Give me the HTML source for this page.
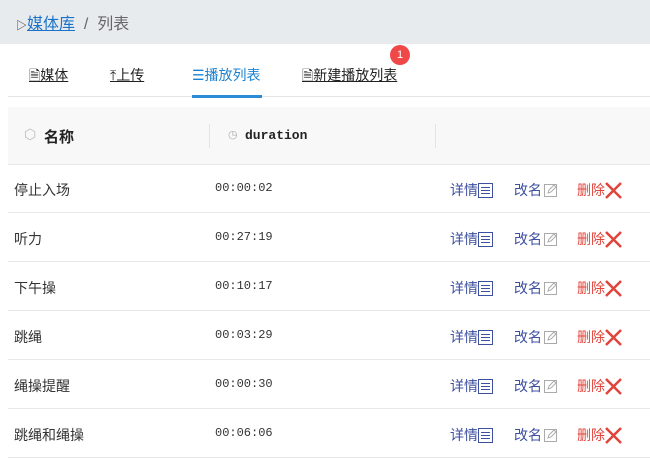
<!DOCTYPE html><html><head><meta charset="utf-8"><style>
body{margin:0;width:650px;height:463px;overflow:hidden;background:#fff;font-family:"Liberation Sans","Noto Sans CJK SC",sans-serif;font-size:14px;color:#333}
.top{position:absolute;left:0;top:0;width:650px;height:44px;background:#e8ebee}
.bc{position:absolute;left:16px;top:10px;font-size:16px;color:#666}
.bc a{color:#1a73c8;text-decoration:underline}
.tab{position:absolute;top:65px;font-size:14px;color:#222;text-decoration:underline}
.sep{position:absolute;left:8px;width:642px;height:1px;background:#e6e6e6}
.th{position:absolute;left:8px;top:107px;width:642px;height:57px;background:#f8f8f8;border-bottom:1px solid #e8e8e8}
.row{position:absolute;left:8px;width:642px;height:48px;border-bottom:1px solid #e8e8e8}
.row span{position:absolute;top:16px;display:flex;align-items:center}
.n{left:6px}.d{left:207px;font-family:"Liberation Mono",monospace;font-size:12px;top:17px!important}
.a1{left:442px;color:#3d4f9f}.a2{left:506px;color:#3d4f9f}.a3{left:569px;color:#e0443b}
svg{display:block}
</style></head><body>
<div class="top"><div class="bc"><span style="font-size:11px;color:#333">▷</span><a>媒体库</a> &nbsp;/&nbsp; 列表</div></div>
<div class="tab" style="left:29px">🗎媒体</div>
<div class="tab" style="left:110px">⤒上传</div>
<div class="tab" style="left:192px;color:#1a82d0;text-decoration:none">☰播放列表</div>
<div class="sep" style="top:96px"></div>
<div style="position:absolute;left:192px;top:95px;width:70px;height:3px;background:#2d8ad4"></div>
<div class="tab" style="left:302px">🗎新建播放列表</div>
<div style="position:absolute;left:390px;top:45px;width:20px;height:20px;border-radius:50%;background:#f04848;color:#fff;font-size:11px;text-align:center;line-height:20px">1</div>
<div class="th">
<span style="position:absolute;left:16px;top:19px;color:#bbb">⬡</span>
<span style="position:absolute;left:36px;top:19px;font-weight:bold;font-size:15px;color:#222">名称</span>
<div style="position:absolute;left:201px;top:17px;width:1px;height:24px;background:#e4e4e4"></div>
<span style="position:absolute;left:220px;top:21px;color:#aaa;font-size:11px">◷</span>
<span style="position:absolute;left:237px;top:21px;font-family:'Liberation Mono',monospace;font-weight:bold;font-size:13px;color:#222">duration</span>
<div style="position:absolute;left:427px;top:17px;width:1px;height:24px;background:#e4e4e4"></div>
</div>
<div id="rows"></div>
<script>
const d=[["停止入场","00:00:02"],["听力","00:27:19"],["下午操","00:10:17"],["跳绳","00:03:29"],["绳操提醒","00:00:30"],["跳绳和绳操","00:06:06"]];
const det='<svg width="15" height="15" viewBox="0 0 15 15"><rect x="0.5" y="0.5" width="14" height="14" fill="none" stroke="#3d4f9f"/><path d="M3 4.5h9M3 7.5h9M3 10.5h9" stroke="#3d4f9f"/></svg>';
const ed='<svg width="14" height="14" viewBox="0 0 14 14" style="margin-left:2px"><rect x="0.5" y="1.5" width="12" height="12" fill="none" stroke="#aaa"/><path d="M4 10l1-3 5-5 2 2-5 5z" fill="none" stroke="#aaa"/></svg>';
const x='<svg width="17" height="17" viewBox="0 0 17 17"><path d="M1 1L16 16M16 1L1 16" stroke="#e0443b" stroke-width="2.5"/></svg>';
let h='';d.forEach((r,i)=>{h+=`<div class="row" style="top:${164+i*49}px"><span class="n">${r[0]}</span><span class="d">${r[1]}</span><span class="a1">详情${det}</span><span class="a2">改名${ed}</span><span class="a3">删除${x}</span></div>`});
document.getElementById('rows').innerHTML=h;
</script>
</body></html>
